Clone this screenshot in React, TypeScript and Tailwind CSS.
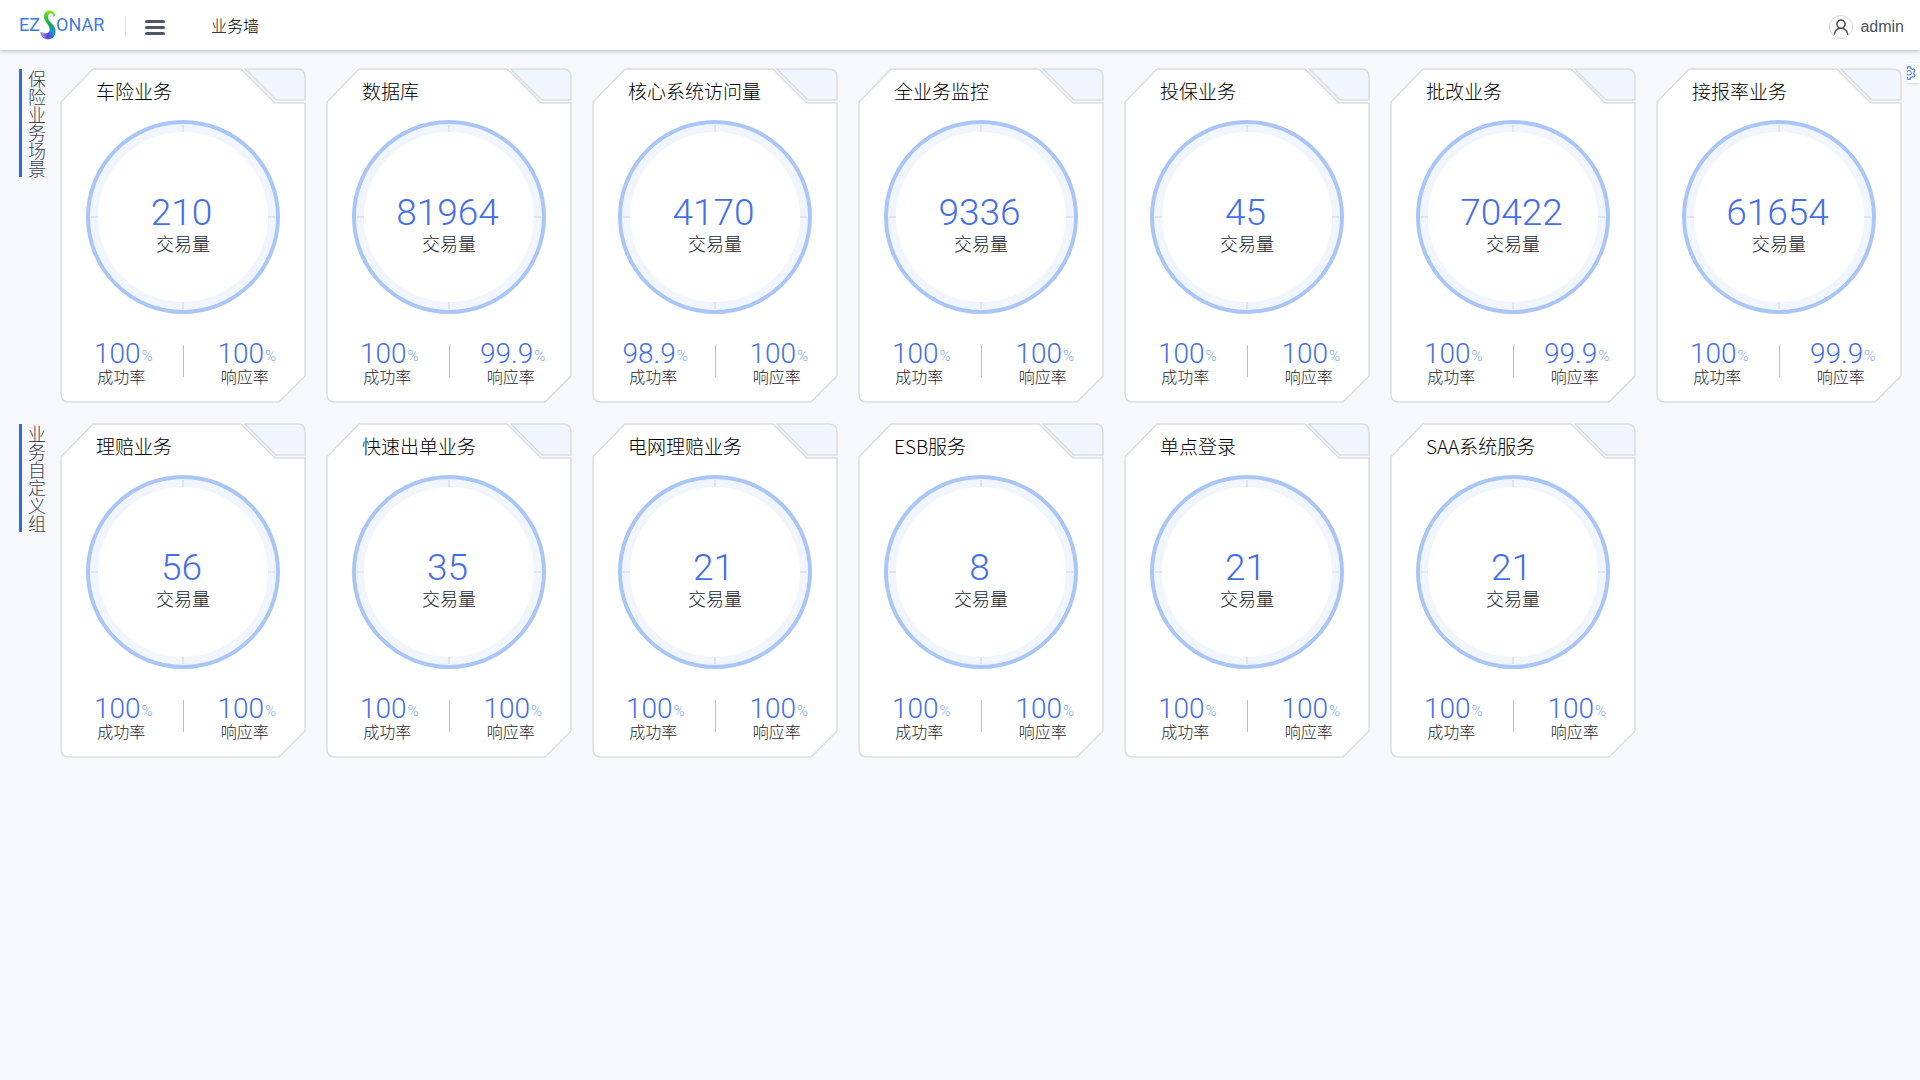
import { AiOutlineSetting, AiOutlineUser } from 'react-icons/ai';

type Card = { title: string; count: string; success: string; response: string };

const groups: { name: string; cards: Card[] }[] = [
  {
    name: '保险业务场景',
    cards: [
      { title: '车险业务', count: '210', success: '100', response: '100' },
      { title: '数据库', count: '81964', success: '100', response: '99.9' },
      { title: '核心系统访问量', count: '4170', success: '98.9', response: '100' },
      { title: '全业务监控', count: '9336', success: '100', response: '100' },
      { title: '投保业务', count: '45', success: '100', response: '100' },
      { title: '批改业务', count: '70422', success: '100', response: '99.9' },
      { title: '接报率业务', count: '61654', success: '100', response: '99.9' },
    ],
  },
  {
    name: '业务自定义组',
    cards: [
      { title: '理赔业务', count: '56', success: '100', response: '100' },
      { title: '快速出单业务', count: '35', success: '100', response: '100' },
      { title: '电网理赔业务', count: '21', success: '100', response: '100' },
      { title: 'ESB服务', count: '8', success: '100', response: '100' },
      { title: '单点登录', count: '21', success: '100', response: '100' },
      { title: 'SAA系统服务', count: '21', success: '100', response: '100' },
    ],
  },
];

function Logo() {
  return (
    <a href="#" aria-label="EZSONAR" className="flex items-center font-['Roboto',sans-serif] text-lg leading-7 font-normal text-[#3f7be0]">
      <span>EZ</span>
      <svg viewBox="0 0 48 92" className="h-[30px] w-4" aria-hidden="true">
        <defs>
          <linearGradient id="swoosh" x1="0.6" y1="0" x2="0.6" y2="1">
            <stop offset="0" stopColor="#8be80c" />
            <stop offset="0.25" stopColor="#2fc43c" />
            <stop offset="0.5" stopColor="#12a85e" />
            <stop offset="0.72" stopColor="#1f8fd0" />
            <stop offset="1" stopColor="#2f7df0" />
          </linearGradient>
          <linearGradient id="tail" x1="0" y1="0" x2="1" y2="0">
            <stop offset="0" stopColor="#b9a4f5" />
            <stop offset="0.5" stopColor="#6a3fe0" />
            <stop offset="1" stopColor="#2456d8" stopOpacity="0" />
          </linearGradient>
        </defs>
        <path d="M46 16C44 4 32-1 22 3 10 8 9 22 16 34c6 10 14 17 13 29-1 10-14 13-28 4 0 15 14 25 28 22 15-3 21-17 17-32C42 44 29 38 25 26c-3-10 2-17 9-16 5 1 7 6 6 12Z" fill="url(#swoosh)" />
        <path d="M29 63c-1 10-14 13-28 4 0 15 14 25 28 22 7-2 12-6 15-11-8 2-15-5-15-15Z" fill="url(#tail)" />
      </svg>
      <span>ONAR</span>
    </a>
  );
}

function Header() {
  return (
    <header className="relative flex h-[50px] items-center bg-white pt-1 pr-4 pl-[19px] shadow-[0_1px_4px_rgba(0,21,41,0.3)]">
      <div className="flex w-[106px] pb-1">
        <Logo />
      </div>
      <div className="h-[22px] w-px bg-[#dfe1e6]" />
      <button type="button" aria-label="菜单" className="ml-[19px] flex w-5 flex-col gap-[3px]">
        <span className="h-[3px] rounded-full bg-[#4f5768]" />
        <span className="h-[3px] rounded-full bg-[#4f5768]" />
        <span className="h-[3px] rounded-full bg-[#4f5768]" />
      </button>
      <h1 className="ml-[46px] pb-1 text-base leading-6 text-black">业务墙</h1>
      <a href="#" className="ml-auto flex items-center gap-[7px] font-['Liberation_Sans',sans-serif] text-base font-normal text-[#4b5160]">
        <span className="flex size-6 items-center justify-center rounded-full border border-[#d5d9e0]">
          <AiOutlineUser className="size-5" />
        </span>
        admin
      </a>
    </header>
  );
}

function CardFrame() {
  return (
    <svg viewBox="0 0 246 335" preserveAspectRatio="none" className="absolute inset-0 h-full w-full" aria-hidden="true">
      <g stroke="#dcdde0" strokeWidth="1.5">
        <path d="M33 1H181L215 35H245V308L219 334H9Q1 334 1 326V34Z" fill="#fff" />
        <path d="M185 1H237Q245 1 245 9V32H216Z" fill="#f0f5fe" />
      </g>
    </svg>
  );
}

function Dial({ count }: { count: string }) {
  return (
    <div className="relative mx-auto mt-[17px] size-[194px] pt-[73px] text-center">
      <svg viewBox="0 0 194 194" className="absolute inset-0 size-full" fill="none" aria-hidden="true">
        <circle cx="97" cy="97" r="89" stroke="#f0f5fe" strokeWidth="8" />
        <circle cx="97" cy="97" r="95" stroke="#a9c6f7" strokeWidth="4" />
        <path d="M97 5V12M97 182V189M5 97H12M182 97H189" stroke="#e4e5e8" strokeWidth="2" />
      </svg>
      <div className="relative pr-[3px] font-['Roboto',sans-serif] text-[37px] leading-10 font-light text-[#456fe8]">{count}</div>
      <div className="relative mt-[2px] font-['Liberation_Sans','Noto_Sans_CJK_SC',sans-serif] text-lg leading-5 text-[#23262e]">交易量</div>
    </div>
  );
}

function Stat({ value, label }: { value: string; label: string }) {
  return (
    <div className="flex flex-1 flex-col items-center">
      <div className="flex items-center gap-px pl-1 font-['Roboto',sans-serif] text-[28px] leading-[30px] font-light text-[#456fe8]">
        {value}
        <span className="pt-1 text-[15px] leading-5 text-[#7fa9f5]">%</span>
      </div>
      <div className="font-['Liberation_Sans','Noto_Sans_CJK_SC',sans-serif] text-base leading-[18px] text-[#23262e]">{label}</div>
    </div>
  );
}

function BusinessCard({ card }: { card: Card }) {
  return (
    <article className="relative pt-[11px] pb-4">
      <CardFrame />
      <h3 className="relative pl-9 text-[19px] leading-6 text-black">{card.title}</h3>
      <Dial count={card.count} />
      <div className="relative mt-[25px] flex items-start">
        <Stat value={card.success} label="成功率" />
        <div className="mt-[6px] h-8 w-px bg-[#a3c0f5]" />
        <Stat value={card.response} label="响应率" />
      </div>
    </article>
  );
}

export default function App() {
  return (
    <div className="min-h-screen bg-[#f7f8fc] font-['Noto_Sans_CJK_SC',sans-serif] font-light">
      <Header />
      <main className="flex flex-col gap-5 pt-[18px] pr-[18px] pb-5 pl-[19px]">
        {groups.map((group) => (
          <section key={group.name} className="flex items-start">
            <h2 className="mt-px mr-[14px] box-content w-[18px] border-l-[3px] border-[#2a6be4] pl-[6px] text-lg leading-[18px] break-all text-[#3d414c]">
              {group.name}
            </h2>
            <div className="grid flex-1 grid-cols-7 gap-5">
              {group.cards.map((card) => (
                <BusinessCard key={card.title} card={card} />
              ))}
            </div>
          </section>
        ))}
      </main>
      <button
        type="button"
        aria-label="设置"
        className="absolute top-[63px] right-0 flex h-5 w-[13px] items-center justify-end overflow-hidden bg-white pr-[3px] shadow-sm"
      >
        <AiOutlineSetting className="size-4 shrink-0 text-[#4f78ea]" />
      </button>
    </div>
  );
}
